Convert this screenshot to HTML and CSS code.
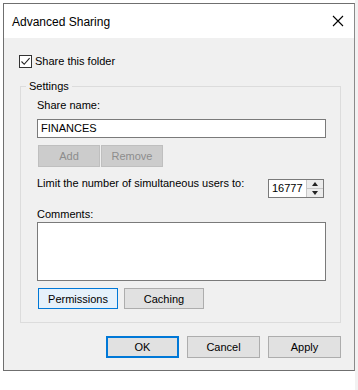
FILE: index.html
```html
<!DOCTYPE html>
<html lang="en">
<head>
  <meta charset="UTF-8" />
  <title>Advanced Sharing</title>
  <link rel="stylesheet" href="styles.css">
</head>
<body>
  <div class="page">
    <div class="window">
      <div class="titlebar">
        <span class="title">Advanced Sharing</span>
        <span class="close">
          <svg width="12" height="12" viewBox="0 0 12 12"><path d="M1 1L11 11M11 1L1 11" stroke="#000" stroke-width="1.1" fill="none"/></svg>
        </span>
      </div>
      <div class="dialog">
        <label class="check-row">
          <span class="checkbox">
            <svg width="11" height="11" viewBox="0 0 11 11"><path d="M1.5 5.5L4.2 8.3L9.6 2.2" stroke="#222" stroke-width="1.1" fill="none"/></svg>
          </span>
          Share this folder
        </label>

        <fieldset class="group">
          <legend>Settings</legend>
          <div class="label">Share name:</div>
          <div class="textbox">FINANCES</div>
          <div class="btn-row small">
            <button class="btn disabled add">Add</button>
            <button class="btn disabled">Remove</button>
          </div>
          <div class="limit-row">
            <span class="label">Limit the number of simultaneous users to:</span>
            <div class="spinner">
              <span class="spin-value">16777</span>
              <span class="spin-arrows">
                <span class="arrow up"></span>
                <span class="arrow down"></span>
              </span>
            </div>
          </div>
          <div class="label comments">Comments:</div>
          <div class="textarea"></div>
          <div class="btn-row wide">
            <button class="btn focus-light">Permissions</button>
            <button class="btn">Caching</button>
          </div>
        </fieldset>

        <div class="actions">
          <button class="btn default">OK</button>
          <button class="btn">Cancel</button>
          <button class="btn">Apply</button>
        </div>
      </div>
    </div>
    <div class="side-strip"></div>
  </div>
</body>
</html>
```

FILE: styles.css
```css
body {
  margin: 0;
  padding: 0;
  background: #fff;
  font-family: "Liberation Sans", Arial, sans-serif;
  font-size: 11px;
  color: #000;
}

.page {
  display: flex;
  align-items: flex-start;
}

.window {
  margin: 3px 0 0 3px;
  width: 352px;
  flex-shrink: 0;
  box-sizing: border-box;
  border: 1px solid #6f6f6f;
  border-right-color: #8a8a8a;
}

.side-strip {
  width: 3px;
  height: 390px;
  background: #f2f2f2;
}

.titlebar {
  height: 34px;
  background: #fff;
  display: flex;
  align-items: center;
  justify-content: space-between;
  padding: 0 8px 0 8px;
}

.title {
  font-size: 12px;
  margin-top: 2px;
}

.close {
  display: flex;
  margin-right: 2px;
}

.dialog {
  background: #f0f0f0;
  padding: 15px 13px 12px 15px;
}

.check-row {
  display: flex;
  align-items: center;
  height: 16px;
  gap: 3px;
}

.checkbox {
  width: 11px;
  height: 11px;
  border: 1px solid #333;
  background: #fff;
  display: flex;
}

.group {
  margin: 9px 0 0 1px;
  padding: 3px 14px 13px 16px;
  border: 1px solid #dcdcdc;
  min-width: 0;
}

.group legend {
  padding: 0 3px;
  margin-left: -11px;
  line-height: 16px;
}

.label {
  line-height: 16px;
}

.textbox {
  margin-top: 6px;
  height: 19px;
  box-sizing: border-box;
  border: 1px solid #7a7a7a;
  background: #fff;
  padding: 0 3px;
  line-height: 17px;
}

.btn-row {
  display: flex;
  margin-left: 1px;
}

.btn-row.small {
  margin-top: 7px;
  gap: 1px;
}

.btn-row.small .btn {
  width: 62px;
  height: 22px;
}

.btn-row.wide {
  margin-top: 7px;
  gap: 6px;
}

.btn-row.wide .btn {
  width: 80px;
  height: 21px;
}

.btn {
  font-family: inherit;
  font-size: 11px;
  color: #000;
  background: #e1e1e1;
  border: 1px solid #adadad;
  box-sizing: border-box;
  padding: 0;
  margin: 0;
}

.btn.disabled {
  background: #cccccc;
  border-color: #bfbfbf;
  color: #8d8d8d;
}

.btn.focus-light {
  background: #e5f1fb;
  border-color: #0078d7;
}

.btn.default {
  border: 2px solid #0078d7;
}

.limit-row {
  margin-top: 8px;
  display: flex;
  justify-content: space-between;
  align-items: flex-start;
}

.spinner {
  margin-top: 4px;
  margin-right: 2px;
  width: 56px;
  height: 19px;
  box-sizing: border-box;
  border: 1px solid #7a7a7a;
  background: #fff;
  display: flex;
  overflow: hidden;
}

.spin-value {
  flex: 1;
  padding-left: 3px;
  line-height: 17px;
  overflow: hidden;
  white-space: nowrap;
}

.spin-arrows {
  width: 16px;
  display: flex;
  flex-direction: column;
  border-left: 1px solid #c8c8c8;
}

.arrow {
  flex: 1;
  background: #ececec;
  display: flex;
  align-items: center;
  justify-content: center;
}

.arrow.up {
  border-bottom: 1px solid #c8c8c8;
}

.arrow::before {
  content: "";
  border-left: 3px solid transparent;
  border-right: 3px solid transparent;
}

.arrow.up::before {
  border-bottom: 4px solid #222;
}

.arrow.down::before {
  border-top: 4px solid #222;
}

.comments {
  margin-top: 8px;
}

.textarea {
  height: 59px;
  box-sizing: border-box;
  border: 1px solid #7a7a7a;
  background: #fff;
}

.actions {
  margin-top: 13px;
  display: flex;
  justify-content: flex-end;
  gap: 8px;
}

.actions .btn {
  width: 73px;
  height: 22px;
}
```
